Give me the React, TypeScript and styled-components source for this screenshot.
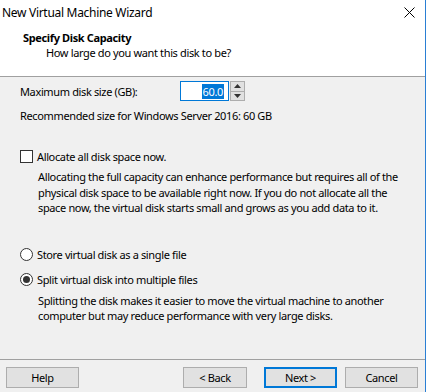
import React from "react";
import styled, { createGlobalStyle } from "styled-components";

const Global = createGlobalStyle`
  html, body { margin: 0; padding: 0; background: #f0f0f0; }
  body { font-family: "Noto Sans", "Liberation Sans", sans-serif; font-size: 11px; letter-spacing: -0.36px; color: #000; }
`;

const Win = styled.div`
  width: 426px;
  height: 392px;
  box-sizing: border-box;
  border-right: 1px solid #2a7fd4;
  display: flex;
  flex-direction: column;
  background: #f0f0f0;
  overflow: hidden;
`;

const Top = styled.div`
  background: #fff;
  height: 76px;
  flex: none;
  border-bottom: 1px solid #a0a0a0;
  display: flex;
  flex-direction: column;
`;

const TitleBar = styled.div`
  height: 24px;
  display: flex;
  align-items: center;
  justify-content: space-between;
  padding: 0 10px 0 2px;
`;

const TitleText = styled.span`
  font-size: 12px;
  letter-spacing: -0.3px;
`;

const Header = styled.div`
  padding: 6px 0 0 23px;
  display: flex;
  flex-direction: column;
`;

const HeaderTitle = styled.div`
  font-weight: bold;
  line-height: 15px;
`;

const HeaderSub = styled.div`
  padding-left: 23px;
  line-height: 16px;
`;

const Body = styled.div`
  flex: 1;
  padding: 4px 0 0 20px;
  display: flex;
  flex-direction: column;
`;

const Row = styled.div<{ $mt?: number }>`
  display: flex;
  align-items: center;
  margin-top: ${(p) => p.$mt ?? 0}px;
  height: 20px;
`;

const Label = styled.span<{ $w?: number }>`
  width: ${(p) => (p.$w ? `${p.$w}px` : "auto")};
`;

const Spin = styled.div`
  display: flex;
  height: 20px;
`;

const SpinInput = styled.div`
  width: 49px;
  box-sizing: border-box;
  border: 1px solid #0078d7;
  background: #fff;
  display: flex;
  align-items: center;
  justify-content: flex-end;
  padding-right: 4px;
`;

const Selected = styled.span`
  background: #0078d7;
  color: #fff;
  line-height: 15px;
  padding: 0 1px;
`;

const SpinButtons = styled.div`
  display: flex;
  flex-direction: column;
  width: 15px;
  margin-left: 1px;
`;

const SpinBtn = styled.div`
  flex: 1;
  background: #e1e1e1;
  border: 1px solid #adadad;
  display: flex;
  align-items: center;
  justify-content: center;
  & + & { border-top: none; }
`;

const CheckRow = styled.label<{ $mt: number }>`
  display: flex;
  align-items: center;
  gap: 4px;
  margin-top: ${(p) => p.$mt}px;
  height: 16px;
`;

const Check = styled.span`
  width: 13px;
  height: 13px;
  box-sizing: border-box;
  border: 1px solid #333;
  background: #fff;
`;

const Radio = styled.span<{ $on?: boolean }>`
  width: 13px;
  height: 13px;
  box-sizing: border-box;
  border: 1px solid #333;
  border-radius: 50%;
  background: #fff;
  display: flex;
  align-items: center;
  justify-content: center;
  &::after {
    content: "";
    display: ${(p) => (p.$on ? "block" : "none")};
    width: 7px;
    height: 7px;
    border-radius: 50%;
    background: #333;
  }
`;

const Para = styled.p<{ $mt: number }>`
  margin: ${(p) => p.$mt}px 0 0 18px;
  line-height: 15.5px;
  white-space: nowrap;
`;

const Footer = styled.div`
  flex: none;
  height: 33px;
  box-sizing: border-box;
  border-top: 1px solid #a0a0a0;
  display: flex;
  align-items: flex-start;
  padding: 7px 7px 0 6px;
`;

const Button = styled.button<{ $default?: boolean; $ml?: number; $w?: number }>`
  width: ${(p) => p.$w ?? 73}px;
  height: 21px;
  margin-left: ${(p) => p.$ml ?? 0}px;
  box-sizing: border-box;
  background: #e1e1e1;
  border: ${(p) => (p.$default ? "2px solid #0078d7" : "1px solid #adadad")};
  font: inherit;
  letter-spacing: inherit;
  color: #000;
  padding: 0;
`;

export default function App() {
  return (
    <>
      <Global />
      <Win>
        <Top>
          <TitleBar>
            <TitleText>New Virtual Machine Wizard</TitleText>
            <svg width="11" height="11" viewBox="0 0 11 11">
              <path d="M0.5 0.5 L10.5 10.5 M10.5 0.5 L0.5 10.5" stroke="#000" strokeWidth="1" />
            </svg>
          </TitleBar>
          <Header>
            <HeaderTitle>Specify Disk Capacity</HeaderTitle>
            <HeaderSub>How large do you want this disk to be?</HeaderSub>
          </Header>
        </Top>
        <Body>
          <Row>
            <Label $w={160}>Maximum disk size (GB):</Label>
            <Spin>
              <SpinInput>
                <Selected>60.0</Selected>
              </SpinInput>
              <SpinButtons>
                <SpinBtn>
                  <svg width="7" height="4" viewBox="0 0 7 4"><path d="M0 4 L3.5 0 L7 4 Z" fill="#333" /></svg>
                </SpinBtn>
                <SpinBtn>
                  <svg width="7" height="4" viewBox="0 0 7 4"><path d="M0 0 L3.5 4 L7 0 Z" fill="#333" /></svg>
                </SpinBtn>
              </SpinButtons>
            </Spin>
          </Row>
          <Row $mt={4}>Recommended size for Windows Server 2016: 60 GB</Row>
          <CheckRow $mt={23}>
            <Check />
            Allocate all disk space now.
          </CheckRow>
          <Para $mt={5}>
            Allocating the full capacity can enhance performance but requires all of the
            <br />
            physical disk space to be available right now. If you do not allocate all the
            <br />
            space now, the virtual disk starts small and grows as you add data to it.
          </Para>
          <CheckRow $mt={31}>
            <Radio />
            Store virtual disk as a single file
          </CheckRow>
          <CheckRow $mt={9}>
            <Radio $on />
            Split virtual disk into multiple files
          </CheckRow>
          <Para $mt={5}>
            Splitting the disk makes it easier to move the virtual machine to another
            <br />
            computer but may reduce performance with very large disks.
          </Para>
        </Body>
        <Footer>
          <Button>Help</Button>
          <Button $ml={104} $w={64}>&lt; Back</Button>
          <Button $default $ml={17}>Next &gt;</Button>
          <Button $ml={8}>Cancel</Button>
        </Footer>
      </Win>
    </>
  );
}
